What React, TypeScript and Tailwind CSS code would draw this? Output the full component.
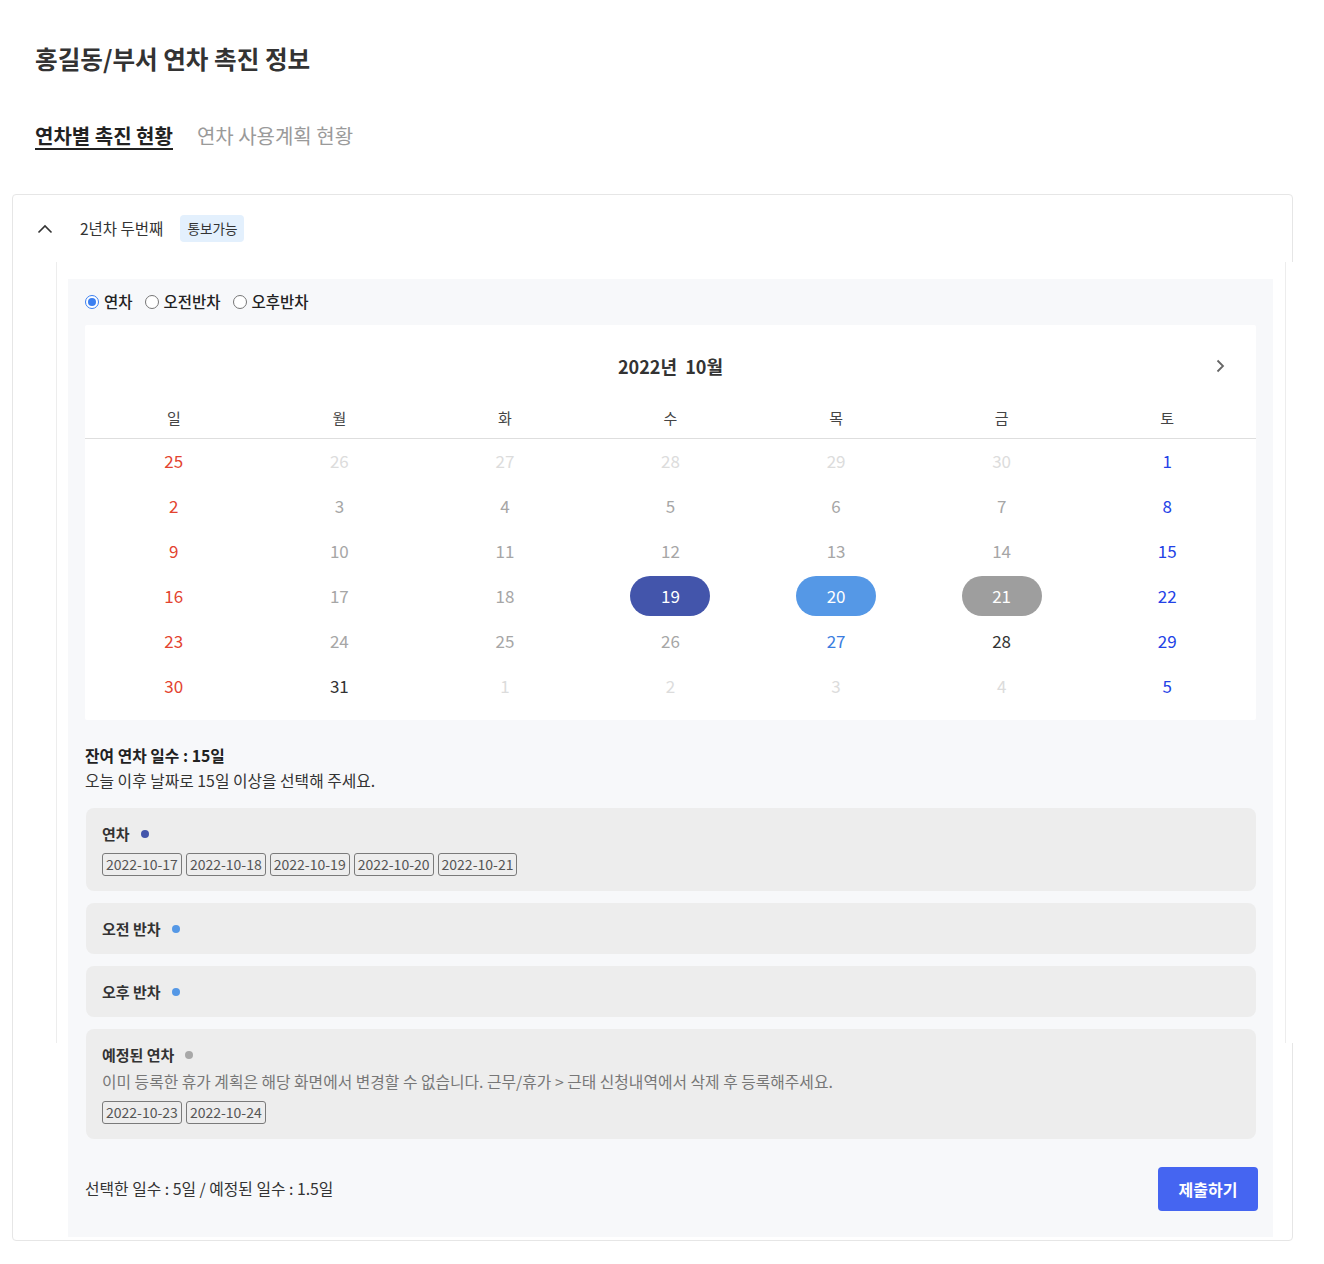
import React from "react";

type Tone = "sun" | "sat" | "day" | "dark" | "out" | "blue" | "pick1" | "pick2" | "pick3";

const weeks: [number, Tone][][] = [
  [[25, "sun"], [26, "out"], [27, "out"], [28, "out"], [29, "out"], [30, "out"], [1, "sat"]],
  [[2, "sun"], [3, "day"], [4, "day"], [5, "day"], [6, "day"], [7, "day"], [8, "sat"]],
  [[9, "sun"], [10, "day"], [11, "day"], [12, "day"], [13, "day"], [14, "day"], [15, "sat"]],
  [[16, "sun"], [17, "day"], [18, "day"], [19, "pick1"], [20, "pick2"], [21, "pick3"], [22, "sat"]],
  [[23, "sun"], [24, "day"], [25, "day"], [26, "day"], [27, "blue"], [28, "dark"], [29, "sat"]],
  [[30, "sun"], [31, "dark"], [1, "out"], [2, "out"], [3, "out"], [4, "out"], [5, "sat"]],
];

const toneClass: Record<Tone, string> = {
  sun: "text-[#e3432f]",
  sat: "text-[#2342e6]",
  day: "text-[#a6a6a6]",
  dark: "text-[#333]",
  out: "text-[#dcdcdc]",
  blue: "text-[#3a7de0]",
  pick1: "bg-[#4355ab] text-white",
  pick2: "bg-[#5598e6] text-white",
  pick3: "bg-[#9e9e9e] text-white",
};

function Radio({ on, label }: { on?: boolean; label: string }) {
  return (
    <label className="flex items-center gap-[5px]">
      <span
        className={
          on
            ? "w-[14px] h-[14px] rounded-full border border-[#3b7ff0] flex items-center justify-center bg-white"
            : "w-[14px] h-[14px] rounded-full border border-[#767676] bg-white"
        }
      >
        {on && <span className="w-[8px] h-[8px] rounded-full bg-[#3b7ff0]" />}
      </span>
      <span className="text-[15.5px] font-medium text-[#222]">{label}</span>
    </label>
  );
}

function Tag({ children }: { children: string }) {
  return (
    <span className="h-[23px] px-[3px] flex items-center border border-[#7a7a7a] rounded-[3px] text-[14px] text-[#555]">
      {children}
    </span>
  );
}

function Legend({ title, dot, children }: { title: string; dot: string; children?: React.ReactNode }) {
  return (
    <div className="bg-[#ededed] rounded-[8px] pl-[16px] pr-4 pt-[16px] pb-[15px]">
      <div className="flex items-center gap-[11px] leading-[20px]">
        <span className="text-[15px] font-bold text-[#333]">{title}</span>
        <span className={"w-[8px] h-[8px] rounded-full " + dot} />
      </div>
      {children}
    </div>
  );
}

export default function App() {
  return (
    <div className="bg-white min-h-[1264px] pb-6 font-['Noto_Sans_CJK_KR','Noto_Sans',sans-serif] text-[#333]">
      <div className="px-[35px] pt-[40px]">
        <h1 className="text-[24.6px] leading-[36px] font-bold text-[#333]">홍길동/부서 연차 촉진 정보</h1>
        <div className="mt-[48px] flex items-start gap-[24px] text-[20px] leading-[24px]">
          <span className="font-bold text-[#222] border-b-2 border-[#222]">연차별 촉진 현황</span>
          <span className="text-[#9a9a9a]">연차 사용계획 현황</span>
        </div>
      </div>

      <div className="mt-[44px] ml-3 w-[1281px] border border-[#e6e6e6] rounded-[4px]">
        <div className="h-[67px] flex items-center pl-[24px]">
          <svg width="16" height="10" viewBox="0 0 16 10" fill="none">
            <path d="M1.5 8.5L8 2l6.5 6.5" stroke="#333" strokeWidth="1.6" />
          </svg>
          <span className="ml-[27px] text-[15.5px] text-[#333]">2년차 두번째</span>
          <span className="ml-[17px] h-[27px] px-[7px] flex items-center rounded-[4px] bg-[#e3f0fd] text-[13.6px] text-[#333]">
            통보가능
          </span>
        </div>

        <div className="relative pl-[55px] pr-[19px] pt-[17px] pb-[3px]">
          <div className="absolute left-[43px] top-0 w-[1230px] h-[781px] bg-white border-l border-r border-[#ededed] shadow-[8px_0_0_0_#fff]" />

          <div className="relative bg-[#f7f8fa] px-[17px] pt-[12px] pb-[26px]">
            <div className="h-[22px] flex items-center gap-[12px]">
              <Radio on label="연차" />
              <Radio label="오전반차" />
              <Radio label="오후반차" />
            </div>

            <div className="mt-[12px] bg-white rounded-[2px] pb-[12px]">
              <div className="h-[82px] grid grid-cols-[1fr_auto_1fr] items-center">
                <span />
                <span className="text-[18px] font-bold text-[#333] whitespace-pre">2022년  10월</span>
                <span className="justify-self-end pr-[31px] flex">
                  <svg width="10" height="16" viewBox="0 0 10 16" fill="none">
                    <path d="M2.5 2.5L8 8l-5.5 5.5" stroke="#666" strokeWidth="1.8" />
                  </svg>
                </span>
              </div>
              <div className="h-[32px] border-b border-[#dedede] grid grid-cols-7 px-[6px] text-[15px] leading-[22px] text-[#444]">
                {["일", "월", "화", "수", "목", "금", "토"].map((d) => (
                  <span key={d} className="text-center">{d}</span>
                ))}
              </div>
              <div className="px-[6px] -mt-px">
                {weeks.map((w, i) => (
                  <div key={i} className="h-[45px] grid grid-cols-7 items-center">
                    {w.map(([n, t], j) => (
                      <div key={j} className="flex justify-center">
                        {t.startsWith("pick") ? (
                          <span className={"w-[80px] h-[40px] rounded-full flex items-center justify-center text-[17px] " + toneClass[t]}>
                            {n}
                          </span>
                        ) : (
                          <span className={"text-[17px] " + toneClass[t]}>{n}</span>
                        )}
                      </div>
                    ))}
                  </div>
                ))}
              </div>
            </div>

            <div className="mt-[23px] text-[15.8px] leading-[25px]">
              <p className="font-bold text-[#222]">잔여 연차 일수 : 15일</p>
              <p className="text-[#333]">오늘 이후 날짜로 15일 이상을 선택해 주세요.</p>
            </div>

            <div className="mt-[15px] flex flex-col gap-[12px] pl-px">
              <Legend title="연차" dot="bg-[#4355ab]">
                <div className="mt-[9px] flex gap-[4px]">
                  {["2022-10-17", "2022-10-18", "2022-10-19", "2022-10-20", "2022-10-21"].map((d) => (
                    <Tag key={d}>{d}</Tag>
                  ))}
                </div>
              </Legend>
              <Legend title="오전 반차" dot="bg-[#5598e6]" />
              <Legend title="오후 반차" dot="bg-[#5598e6]" />
              <Legend title="예정된 연차" dot="bg-[#a8a8a8]">
                <p className="mt-[6px] text-[15.8px] leading-[22px] text-[#777]">
                  이미 등록한 휴가 계획은 해당 화면에서 변경할 수 없습니다. 근무/휴가 &gt; 근태 신청내역에서 삭제 후 등록해주세요.
                </p>
                <div className="mt-[8px] flex gap-[4px]">
                  <Tag>2022-10-23</Tag>
                  <Tag>2022-10-24</Tag>
                </div>
              </Legend>
            </div>

            <div className="mt-[28px] flex items-center justify-between -mr-[2px]">
              <span className="text-[15.8px] text-[#333]">선택한 일수 : 5일 / 예정된 일수 : 1.5일</span>
              <button className="w-[100px] h-[44px] rounded-[4px] bg-[#4565f1] text-white text-[16px] font-bold">
                제출하기
              </button>
            </div>
          </div>
        </div>
      </div>
    </div>
  );
}
